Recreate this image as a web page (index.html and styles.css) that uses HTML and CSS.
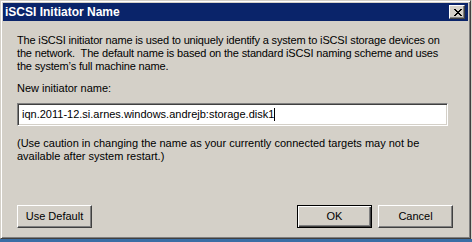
FILE: index.html
```html
<!DOCTYPE html>
<html>
<head>
    <meta charset="UTF-8">
    <title>iSCSI Initiator Name</title>
    <link rel="stylesheet" href="styles.css">
</head>
<body>
    <div class="window">
        <div class="titlebar">
            <span class="title">iSCSI Initiator Name</span>
            <a href="javascript:;" class="close">
                <svg width="8" height="7" viewBox="0 0 8 7">
                    <path d="M0 0h2v1h1v1h2v-1h1v-1h2v1h-1v1h-1v1h-1v1h1v1h1v1h1v1h-2v-1h-1v-1h-2v1h-1v1h-2v-1h1v-1h1v-1h1v-1h-1v-1h-1v-1h-1z" fill="#000"/>
                </svg>
            </a>
        </div>
        <div class="content">
            <p class="intro">The iSCSI initiator name is used to uniquely identify a system to iSCSI storage devices on<br>the network.&nbsp; The default name is based on the standard iSCSI naming scheme and uses<br>the system&rsquo;s full machine name.</p>
            <label class="label" for="name">New initiator name:</label>
            <div class="field">
                <input id="name" type="text" value="iqn.2011-12.si.arnes.windows.andrejb:storage.disk1"><span class="caret"></span>
            </div>
            <p class="note">(Use caution in changing the name as your currently connected targets may not be<br>available after system restart.)</p>
            <div class="buttons">
                <button class="btn">Use Default</button>
                <div class="right">
                    <button class="btn default">OK</button>
                    <button class="btn">Cancel</button>
                </div>
            </div>
        </div>
    </div>
    <div class="desktop"></div>
</body>
</html>
```

FILE: styles.css
```css
* {
    margin: 0;
    padding: 0;
    box-sizing: border-box;
}
body {
    background: #d4d0c8;
    font-family: "Liberation Sans", Arial, sans-serif;
    font-size: 11px;
    color: #000;
    width: 472px;
    height: 242px;
    overflow: hidden;
}
a {
    text-decoration: none;
}
/* classic window frame */
.window {
    width: 471px;
    height: 239px;
    background: #d4d0c8;
    border: 1px solid;
    border-color: #d4d0c8 #404040 #404040 #d4d0c8;
    box-shadow: inset 1px 1px 0 #fff, inset -1px -1px 0 #808080;
    padding: 2px;
    display: flex;
    flex-direction: column;
}
.titlebar {
    flex-shrink: 0;
    height: 18px;
    background: #0a246a;
    display: flex;
    align-items: center;
    justify-content: space-between;
    padding: 0 3px 0 2px;
}
.title {
    color: #fff;
    font-weight: bold;
    font-size: 12px;
}
.close {
    width: 16px;
    height: 14px;
    background: #d4d0c8;
    border: 1px solid;
    border-color: #fff #404040 #404040 #fff;
    box-shadow: inset -1px -1px 0 #808080;
    display: flex;
    align-items: center;
    justify-content: center;
    padding-left: 1px;
}
.content {
    flex: 1;
    display: flex;
    flex-direction: column;
    padding: 13px 14px 8px 14px;
    line-height: 13px;
}
.intro,
.note {
    white-space: nowrap;
}
.intro {
    letter-spacing: -0.16px;
}
.label {
    display: block;
    margin-top: 9px;
}
.field {
    margin-top: 8px;
    width: 431px;
    height: 23px;
    background: #fff;
    border: 1px solid;
    border-color: #808080 #fff #fff #808080;
    box-shadow: inset 1px 1px 0 #404040, inset -1px -1px 0 #d4d0c8;
    display: flex;
    align-items: center;
    padding-left: 4px;
}
.field input {
    border: none;
    outline: none;
    background: transparent;
    font: inherit;
    field-sizing: content;
}
.caret {
    width: 1px;
    height: 13px;
    background: #000;
}
.note {
    margin-top: 11px;
}
.buttons {
    margin-top: auto;
    display: flex;
    justify-content: space-between;
    margin-right: 1px;
}
.right {
    display: flex;
    gap: 6px;
}
.btn {
    width: 75px;
    height: 23px;
    background: #d4d0c8;
    font: inherit;
    color: #000;
    border: 1px solid;
    border-color: #fff #404040 #404040 #fff;
    box-shadow: inset -1px -1px 0 #808080;
}
.btn.default {
    border: 1px solid #000;
    box-shadow: inset 1px 1px 0 #fff, inset -1px -1px 0 #404040, inset -2px -2px 0 #808080;
}
.desktop {
    height: 3px;
    background: #3a6ea5;
}
```
